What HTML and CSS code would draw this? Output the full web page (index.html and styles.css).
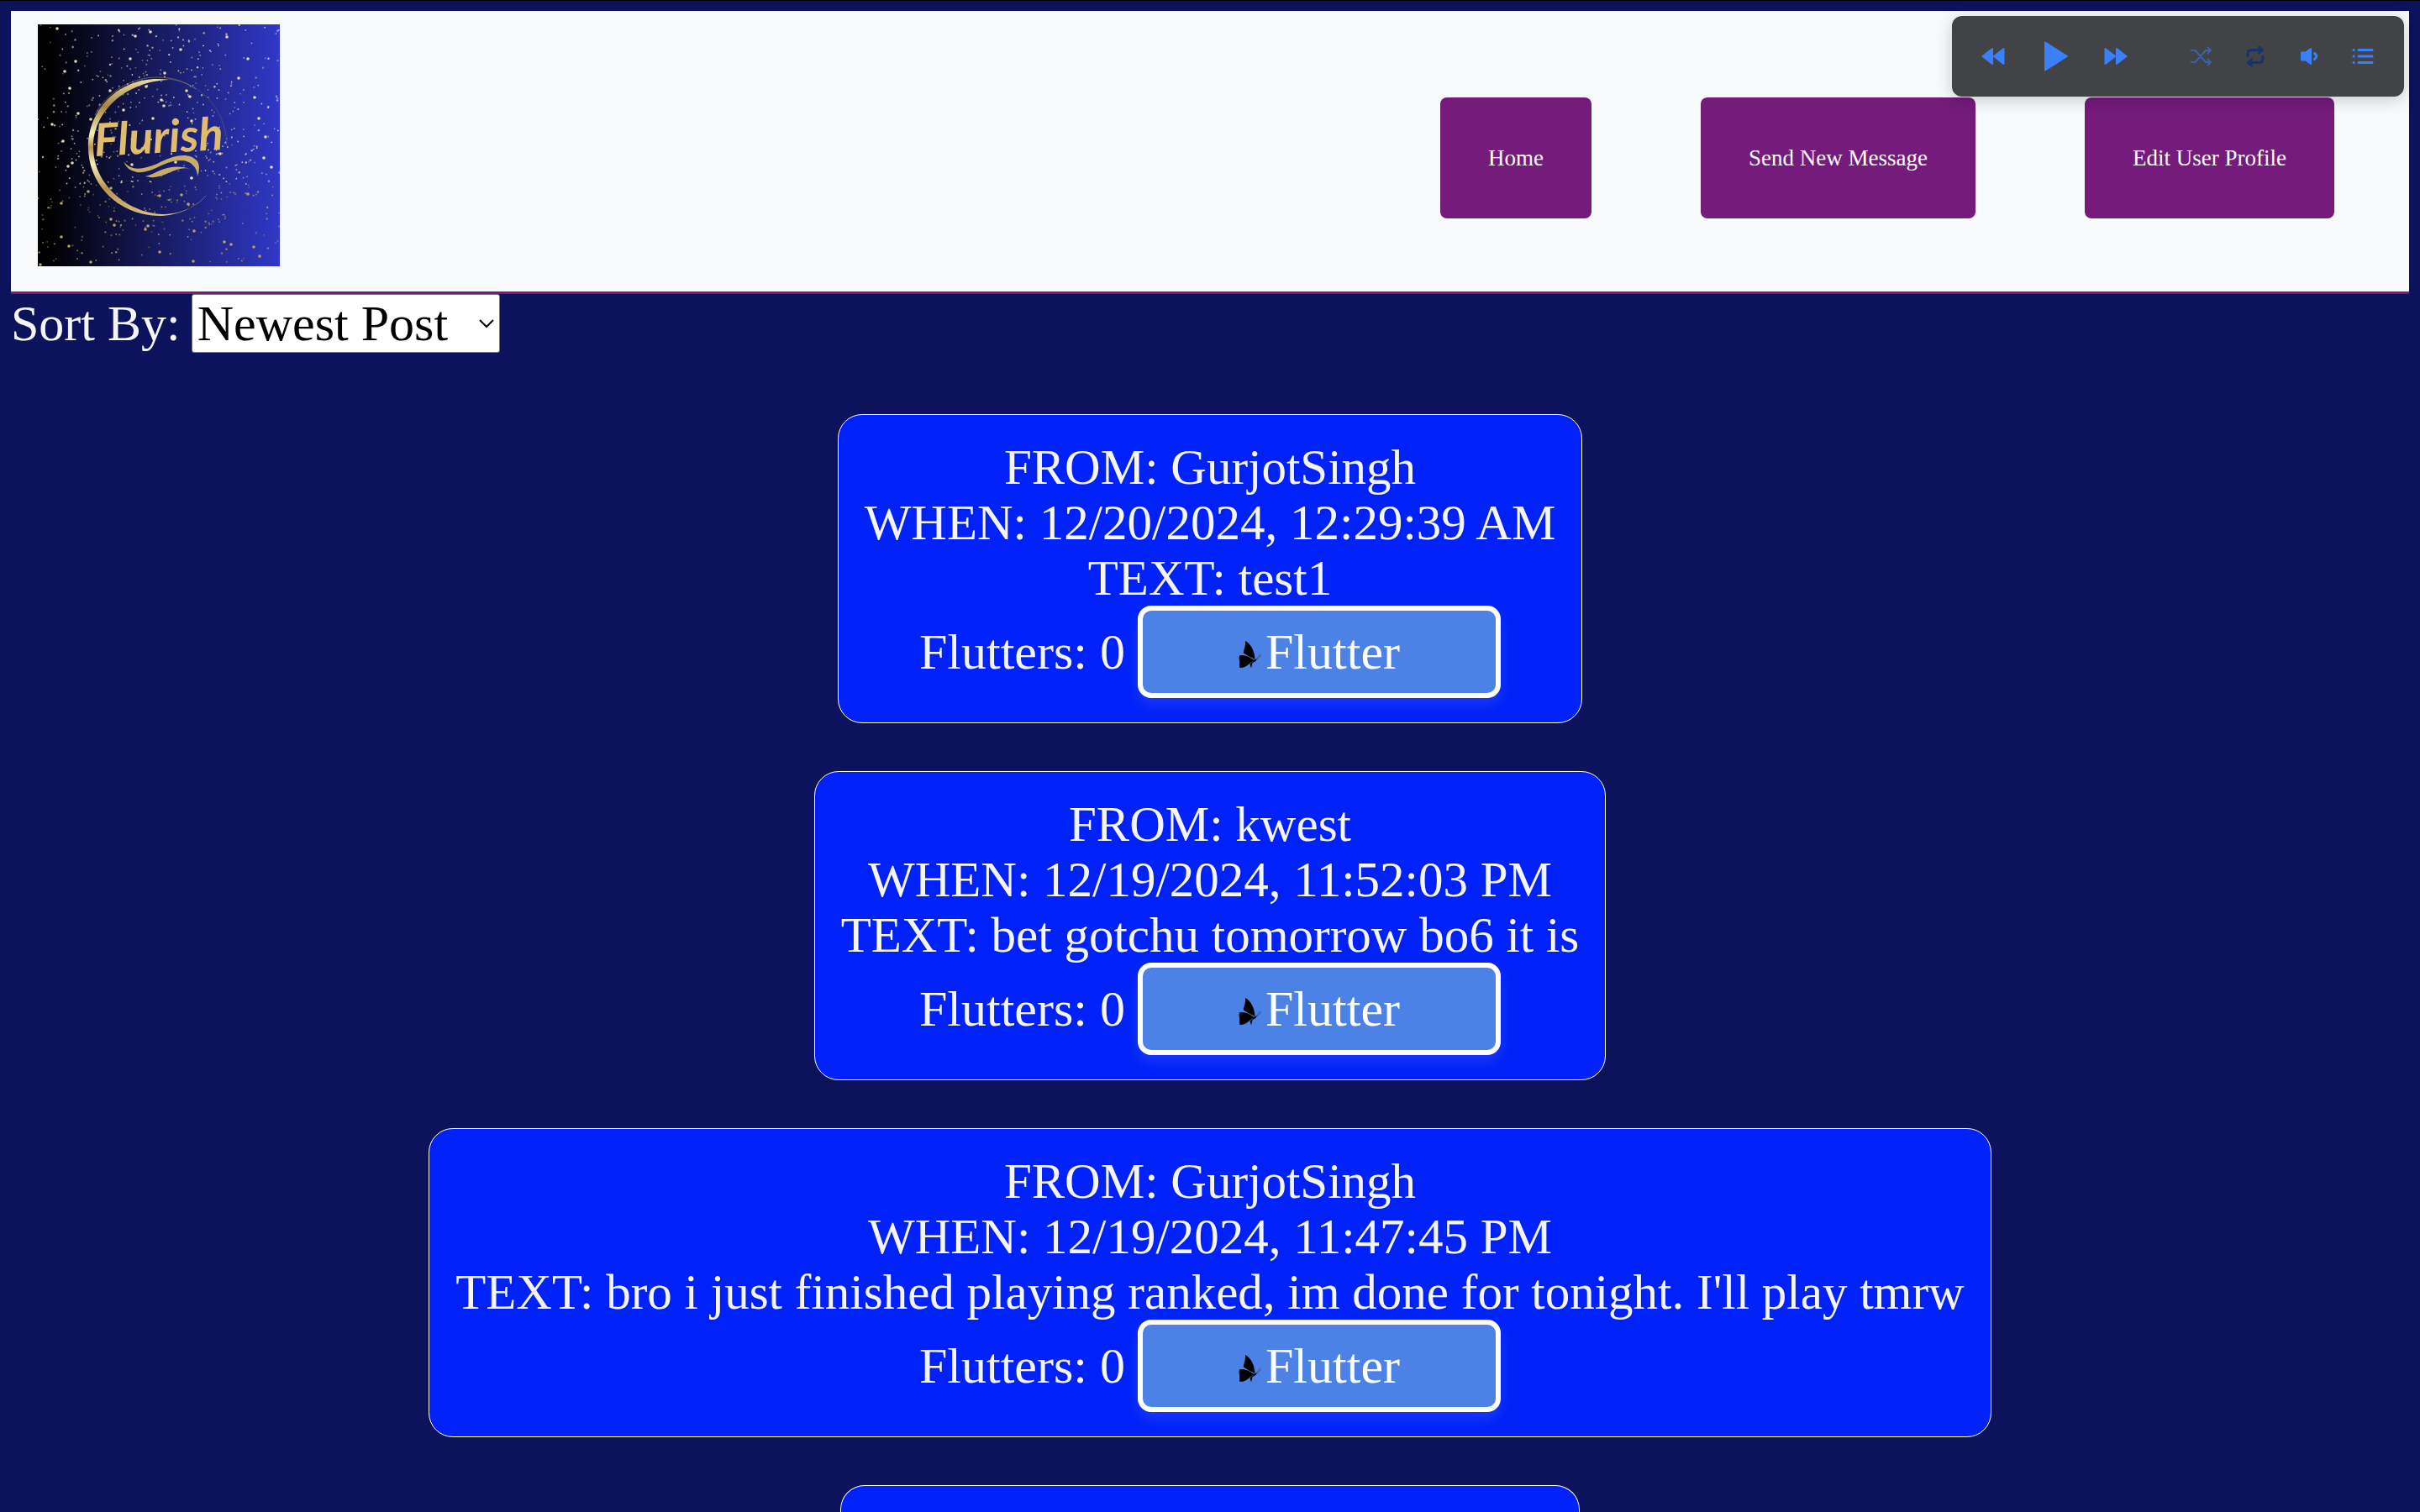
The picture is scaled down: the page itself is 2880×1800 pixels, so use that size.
FILE: index.html
```html
<!DOCTYPE html>
<html lang="en">
<head>
<meta charset="utf-8">
<meta name="viewport" content="width=device-width, initial-scale=1">
<title>Flurish</title>
<link rel="stylesheet" href="styles.css">
</head>
<body>
<svg class="sprite" aria-hidden="true">
  <symbol id="butterfly" viewBox="0 0 27 33">
    <path d="M8 0C14 3 19 11 19.500 22C15 19.500 11 18 6 14.500C5 12 8.500 9 8 0ZM1 17.500C6 16 12 18 18.500 23C14 25 10 32 2 32C-.500 31 2.500 26 .500 21Z"/>
    <path d="M18.500 22.500L22 21L20.500 24L16.500 26L15 32.500L13.500 27.500Z"/>
    <path d="M21 22L26 15.500M21.500 22.500L27 17" fill="none" stroke="#26406e" stroke-width=".6"/>
  </symbol>
</svg>
<header class="site-header">
  <a class="logo" href="#" aria-label="Flurish">
    <svg viewBox="0 0 288 288">
      <defs>
        <linearGradient id="night"><stop offset=".04" stop-color="#000"/><stop offset="1" stop-color="#3038c8"/></linearGradient>
        <linearGradient id="gold" x1="0" y1="0" x2="0" y2="1"><stop offset="0" stop-color="#e8dca0"/><stop offset=".2" stop-color="#a88440"/><stop offset=".4" stop-color="#f5f0b8"/><stop offset=".5" stop-color="#b89450"/><stop offset=".62" stop-color="#f5f0b8"/><stop offset=".8" stop-color="#b89450"/><stop offset="1" stop-color="#d8c080"/></linearGradient>
      </defs>
      <rect width="288" height="288" fill="url(#night)"/>
      <g id="stars"></g>
      <path fill="url(#gold)" d="M156 66C102 58 60 98 60 146C60 192 98 229 148 228C160 227 172 224 182 218C170 224 160 226 148 226C106 224 66 190 66 146C66 104 104 68 156 66Z"/>
      <path fill="none" stroke="#a08c70" stroke-opacity=".6" d="M68 108C82 80 112 63 142 63C160 63 175 68 188 77M182 218Q194 212 200 204"/>
      <path fill="none" stroke="#a08c70" stroke-opacity=".3" d="M150 65C192 66 224 100 225 144"/>
      <text class="logo-word" x="68" y="157" transform="rotate(-3 68 157)">Flurish</text>
      <path fill="#c8ac68" d="M102 163C112 176 126 172 142 166C158 158 178 150 190 163Q194 170 190 181C190 170 182 162 170 162C150 162 136 178 118 176Q106 174 102 163ZM128 181C142 178 154 164 181 172C164 168 150 184 134 182Z"/>
    </svg>
  </a>
  <nav class="site-nav">
    <button class="nav-button" type="button">Home</button>
    <button class="nav-button" type="button">Send New Message</button>
    <button class="nav-button" type="button">Edit User Profile</button>
  </nav>
</header>
<main>
  <div class="sort">
    <label for="sort">Sort By:</label>
    <div class="select-wrap">
      <select id="sort"><option>Newest Post</option><option>Oldest Post</option></select>
      <svg class="chevron" viewBox="0 0 18 11" aria-hidden="true"><path d="M1 1L9 9L17 1" fill="none" stroke="#000" stroke-width="2"/></svg>
    </div>
  </div>
  <div class="feed">
    <article class="post">
      <p>FROM: GurjotSingh</p>
      <p>WHEN: 12/20/2024, 12:29:39 AM</p>
      <p>TEXT: test1</p>
      <div class="flutters"><span>Flutters: 0</span><button class="flutter" type="button"><svg class="butterfly" aria-hidden="true"><use href="#butterfly"/></svg>Flutter</button></div>
    </article>
    <article class="post">
      <p>FROM: kwest</p>
      <p>WHEN: 12/19/2024, 11:52:03 PM</p>
      <p>TEXT: bet gotchu tomorrow bo6 it is</p>
      <div class="flutters"><span>Flutters: 0</span><button class="flutter" type="button"><svg class="butterfly" aria-hidden="true"><use href="#butterfly"/></svg>Flutter</button></div>
    </article>
    <article class="post">
      <p>FROM: GurjotSingh</p>
      <p>WHEN: 12/19/2024, 11:47:45 PM</p>
      <p>TEXT: bro i just finished playing ranked, im done for tonight. I'll play tmrw</p>
      <div class="flutters"><span>Flutters: 0</span><button class="flutter" type="button"><svg class="butterfly" aria-hidden="true"><use href="#butterfly"/></svg>Flutter</button></div>
    </article>
    <article class="post post-next"></article>
  </div>
</main>
<aside class="player" aria-label="Music player">
  <div class="transport">
    <button type="button" aria-label="Previous"><svg width="28" height="22" viewBox="0 0 28 22"><path d="M13 2V20L1.500 11ZM26.500 2V20L15 11Z" class="solid"/></svg></button>
    <button type="button" aria-label="Play"><svg width="34" height="38" viewBox="-4 0 34 38"><path d="M2 2.500V35.500L28 19Z" class="solid"/></svg></button>
    <button type="button" aria-label="Next"><svg width="28" height="22" viewBox="0 0 28 22"><path d="M1.500 2V20L13 11ZM15 2V20L26.500 11Z" class="solid"/></svg></button>
  </div>
  <div class="options">
    <button type="button" class="dim" aria-label="Shuffle"><svg width="28" height="24" viewBox="0 0 28 24"><path class="line thin" d="M2 5H6.500L19 19H25M2 19H6.500L19 5H25M21.500 1.500L25 5L21.500 8.500M21.500 15.500L25 19L21.500 22.500"/></svg></button>
    <button type="button" class="off" aria-label="Repeat"><svg width="24" height="26" viewBox="0 0 24 26"><path class="line" d="M3 13V10Q3 5.500 8 5.500H20M16.500 2L20.500 5.500L16.500 9M21 13V16Q21 20.500 16 20.500H4M7.500 17L3.500 20.500L7.500 24"/></svg></button>
    <button type="button" aria-label="Volume"><svg width="24" height="22" viewBox="0 0 24 22"><path class="solid" d="M3 6.500H8L14 2V20L8 15.500H3Z"/><path class="line" d="M18.500 7.500Q23 11 18.500 14.500"/></svg></button>
    <button type="button" aria-label="Playlist"><svg width="26" height="20" viewBox="0 0 26 20"><path class="line" d="M2 2.500H2.200M2 10H2.200M2 17.500H2.200M8 2.500H24M8 10H24M8 17.500H24"/></svg></button>
  </div>
</aside>
<script src="stars.js"></script>
</body>
</html>
```
FILE: styles.css
```css
html {
  border-top: 1px solid #000;
  background: #0c125c;
}

body {
  margin: 12px 13px 0;
  color: #f5f5f5;
  font: 60px/66px "Liberation Serif", serif;
}

button {
  cursor: pointer;
}

.sprite {
  position: absolute;
  width: 0;
  height: 0;
}

.site-header {
  display: flex;
  justify-content: space-between;
  background: #f8fafc;
  border-bottom: 3px solid #741b7c;
  padding: 16px 89px 0 32px;
}

.logo {
  margin-bottom: 30px;
}

.logo svg {
  display: block;
  width: 288px;
  height: 288px;
}

.logo-word {
  font: italic 700 54px Lato, sans-serif;
  fill: #e0bc70;
}

.site-nav {
  display: flex;
  align-items: center;
  gap: 130px;
}

.nav-button {
  height: 144px;
  padding: 0 57px;
  border: 0;
  border-radius: 8px;
  background: #741b7c;
  color: #fff;
  font: 27px "Liberation Serif", serif;
}

.sort {
  display: flex;
  gap: 13px;
  line-height: 70px;
}

.select-wrap {
  position: relative;
}

select {
  display: block;
  appearance: none;
  width: 367px;
  height: 70px;
  padding: 0 6px;
  border: 1px solid #767676;
  border-radius: 3px;
  background: #fff;
  color: #000;
  font: inherit;
  line-height: 66px;
}

.chevron {
  position: absolute;
  top: 30px;
  right: 7px;
  width: 18px;
  height: 11px;
  pointer-events: none;
}

.feed {
  display: flex;
  flex-direction: column;
  align-items: center;
  gap: 57px;
  margin-top: 73px;
}

.post {
  border: 1px solid #fff;
  border-radius: 29px;
  background: #0022f8;
  padding: 29px 31px;
  font-size: 59px;
  text-align: center;
}

.post p {
  margin: 0;
}

.post-next {
  box-sizing: border-box;
  width: 880px;
  border-bottom: 0;
  border-radius: 29px 29px 0 0;
  padding: 31px 0 0;
}

.flutters {
  display: flex;
  justify-content: center;
  align-items: center;
  gap: 15px;
  font-size: 60px;
}

.flutter {
  width: 432px;
  height: 110px;
  padding: 0;
  border: 6px solid #fff;
  border-radius: 16px;
  background: #4c82e6;
  box-shadow: 0 8px 16px rgba(255, 255, 255, .1);
  color: #fff;
  font: inherit;
}

.butterfly {
  width: 27px;
  height: 33px;
  margin-right: 5px;
}

.player {
  position: absolute;
  top: 19px;
  right: 19px;
  box-sizing: border-box;
  display: flex;
  justify-content: space-between;
  width: 538px;
  height: 96px;
  padding: 0 17px 0 12px;
  border-radius: 12px;
  background: #424347;
  box-shadow: 0 4px 20px rgba(0, 0, 0, .2);
}

.transport,
.options {
  display: flex;
}

.player button {
  display: flex;
  align-items: center;
  justify-content: center;
  width: 64px;
  padding: 0;
  border: 0;
  background: none;
  color: #3a80fa;
}

.player .transport button {
  width: 73px;
}

.player .dim {
  color: #3b62a8;
}

.player .off {
  color: #17336e;
}

.solid {
  fill: currentColor;
  stroke: currentColor;
  stroke-width: 2;
  stroke-linejoin: round;
}

.line {
  fill: none;
  stroke: currentColor;
  stroke-width: 3;
  stroke-linecap: round;
  stroke-linejoin: round;
}

.thin {
  stroke-width: 2;
}
```
FILE: stars.js
```js
// Scatters gold dust over the logo's night sky, denser around the ring.
const sky = document.getElementById("stars");
let seed = 41;
const random = () => (seed = (seed * 16807) % 2147483647) / 2147483647;

function addStar(x, y, radius, opacity) {
  const star = document.createElementNS("http://www.w3.org/2000/svg", "circle");
  star.setAttribute("cx", x.toFixed(1));
  star.setAttribute("cy", y.toFixed(1));
  star.setAttribute("r", radius);
  star.setAttribute("fill", y > 190 ? "#c8a860" : "#f0e2b8");
  star.setAttribute("opacity", opacity.toFixed(2));
  sky.append(star);
}

for (let i = 0; i < 380; i++) {
  addStar(random() * 288, random() * 288, random() < 0.3 ? 1.2 : 0.9, 0.35 + random() * 0.5);
}
for (let i = 0; i < 220; i++) {
  const angle = random() * Math.PI * 2;
  const distance = 50 + random() * 70;
  addStar(142 + Math.cos(angle) * distance, 146 + Math.sin(angle) * distance, 0.9, 0.35 + random() * 0.5);
}

// The brightest stars: x, y pairs.
const bright = [
  [23, 5], [116, 14], [134, 9], [225, 15], [45, 44], [32, 56], [170, 30], [110, 41], [250, 41],
  [151, 58], [239, 64], [38, 76], [86, 79], [129, 74], [177, 79], [181, 86], [147, 90], [150, 97],
  [102, 102], [258, 87], [48, 106], [63, 113], [137, 112], [183, 115], [102, 120], [263, 112],
  [17, 119], [30, 139], [271, 134], [269, 159], [278, 170], [36, 169], [41, 165], [217, 154],
  [112, 167], [164, 164], [183, 183], [87, 195], [60, 199], [145, 204], [171, 203], [250, 202],
  [28, 213], [179, 214], [87, 232], [91, 239], [131, 240], [128, 244], [186, 246], [28, 253],
  [37, 264], [222, 259], [230, 262], [257, 265], [264, 276], [63, 283], [3, 286], [145, 271], [185, 282]
];
bright.forEach(([x, y]) => addStar(x, y, 1.8, 0.95));
```
